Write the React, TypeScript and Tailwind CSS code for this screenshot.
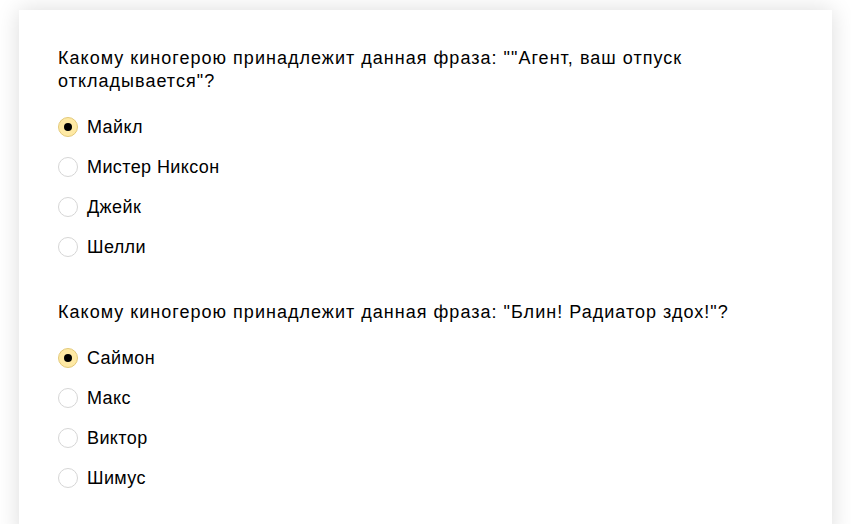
const QUESTIONS = [
  {
    title: 'Какому киногерою принадлежит данная фраза: ""Агент, ваш отпуск откладывается"?',
    options: ['Майкл', 'Мистер Никсон', 'Джейк', 'Шелли'],
    selected: 0,
  },
  {
    title: 'Какому киногерою принадлежит данная фраза: "Блин! Радиатор здох!"?',
    options: ['Саймон', 'Макс', 'Виктор', 'Шимус'],
    selected: 0,
  },
];

function Radio({ checked }: { checked: boolean }) {
  return (
    <span
      className={`w-5 h-5 rounded-full border shrink-0 flex items-center justify-center ${
        checked ? 'bg-[#fee9a4] border-[#e3c979]' : 'bg-white border-[#d6d6d6]'
      }`}
    >
      {checked && <span className="w-2 h-2 rounded-full bg-black" />}
    </span>
  );
}

export default function App() {
  return (
    <div
      className="min-h-screen bg-white pt-[10px] overflow-hidden"
      style={{ fontFamily: '"Liberation Sans", Arial, sans-serif' }}
    >
      <div className="mx-[19px] bg-white shadow-[0_0_22px_rgba(0,0,0,0.14)] px-[39px] pt-[37px] pb-[40px]">
        {QUESTIONS.map((q, qi) => (
          <div key={qi} className={qi > 0 ? 'mt-[34px]' : ''}>
            <p className="text-[18px] leading-[23px] tracking-[1.02px] text-black mb-[14px]">{q.title}</p>
            <div className="flex flex-col">
              {q.options.map((opt, oi) => (
                <label key={opt} className="h-10 flex items-center gap-[9px] cursor-pointer">
                  <Radio checked={oi === q.selected} />
                  <span className="text-[18px] leading-[23px] tracking-[0.4px] text-black">{opt}</span>
                </label>
              ))}
            </div>
          </div>
        ))}
      </div>
    </div>
  );
}
